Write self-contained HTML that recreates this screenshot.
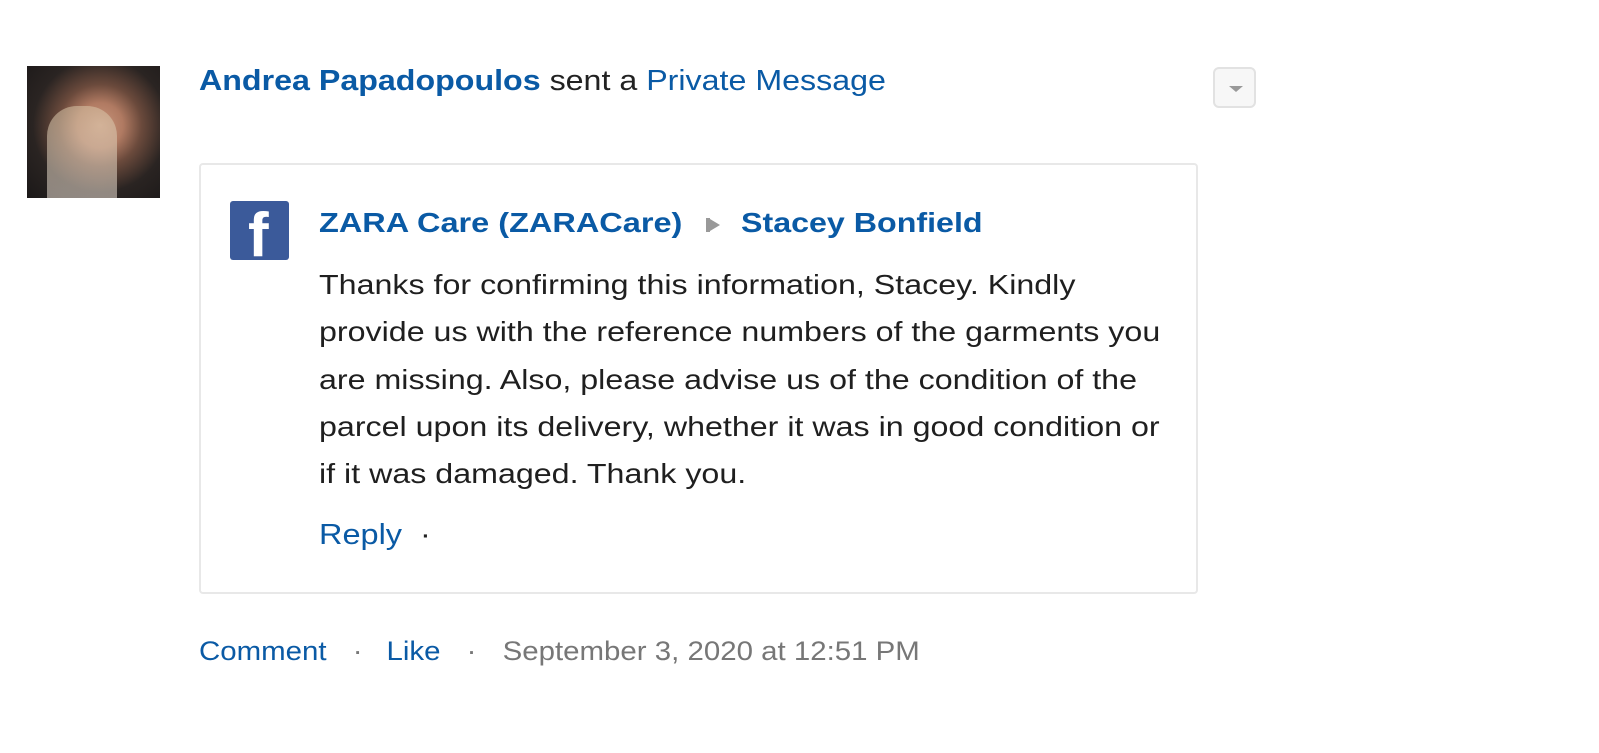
<!DOCTYPE html>
<html><head><meta charset="utf-8"><style>
body{margin:0;width:1599px;height:753px;background:#fff;font-family:"Liberation Sans",Arial,sans-serif;position:relative;overflow:hidden;color:#222}
.a{position:absolute;white-space:nowrap;transform-origin:0 0}
.b{color:#0a5aa5}
.avatar{position:absolute;left:27px;top:66px;width:133px;height:132px;background:radial-gradient(ellipse at 55% 45%,#c9967c 0,#b07a62 22%,#6b4a3c 40%,#2a2422 65%,#1b1818 100%)}
.box{position:absolute;left:199px;top:163px;width:999px;height:431px;border:2px solid #e8e8e8;border-radius:4px;box-sizing:border-box}
.msg{position:absolute;left:319px;top:261px;font-size:28px;line-height:47.3px;color:#1f1f1f;white-space:nowrap;transform:scaleX(1.15);transform-origin:0 0}
</style></head><body>
<div class="avatar"><div style="position:absolute;left:20px;top:40px;width:70px;height:92px;background:linear-gradient(#d7c4a6,#e8ddd2);border-radius:30px 30px 0 0;opacity:.55"></div></div>
<div class="a" style="left:199px;top:65px;font-size:29px;transform:scaleX(1.11)"><b class="b">Andrea Papadopoulos</b> sent a <span class="b">Private Message</span></div>
<div style="position:absolute;left:1213px;top:67px;width:43px;height:41px;box-sizing:border-box;border:2px solid #e2e2e2;border-radius:6px;background:#f7f7f7"><div style="position:absolute;left:14px;top:17px;border-left:7px solid transparent;border-right:7px solid transparent;border-top:6px solid #999"></div></div>
<div class="box"></div>
<div style="position:absolute;left:230px;top:201px;width:59px;height:59px;background:#3b5a9a;border-radius:3px;overflow:hidden"><div class="a" style="left:18px;top:4px;font-size:62px;font-weight:bold;color:#fff;line-height:62px">f</div></div>
<div class="a b" style="left:319px;top:207px;font-size:28px;font-weight:bold;transform:scaleX(1.16)">ZARA Care (ZARACare)</div>
<div style="position:absolute;left:706px;top:218px;width:4px;height:14px;background:#999"></div>
<div style="position:absolute;left:710px;top:219px;border-top:6px solid transparent;border-bottom:6px solid transparent;border-left:10px solid #999"></div>
<div class="a b" style="left:741px;top:207px;font-size:28px;font-weight:bold;transform:scaleX(1.15)">Stacey Bonfield</div>
<div class="msg">Thanks for confirming this information, Stacey. Kindly<br>provide us with the reference numbers of the garments you<br>are missing. Also, please advise us of the condition of the<br>parcel upon its delivery, whether it was in good condition or<br>if it was damaged. Thank you.</div>
<div class="a" style="left:319px;top:519px;font-size:29px;transform:scaleX(1.12)"><span class="b">Reply</span> <span style="margin-left:8px">·</span></div>
<div class="a" style="left:199px;top:636px;font-size:27px;color:#777;transform:scaleX(1.09)"><span class="b">Comment</span><span style="margin:0 22px 0 24px">·</span><span class="b">Like</span><span style="margin:0 24px 0 24px">·</span>September 3, 2020 at 12:51 PM</div>
</body></html>
